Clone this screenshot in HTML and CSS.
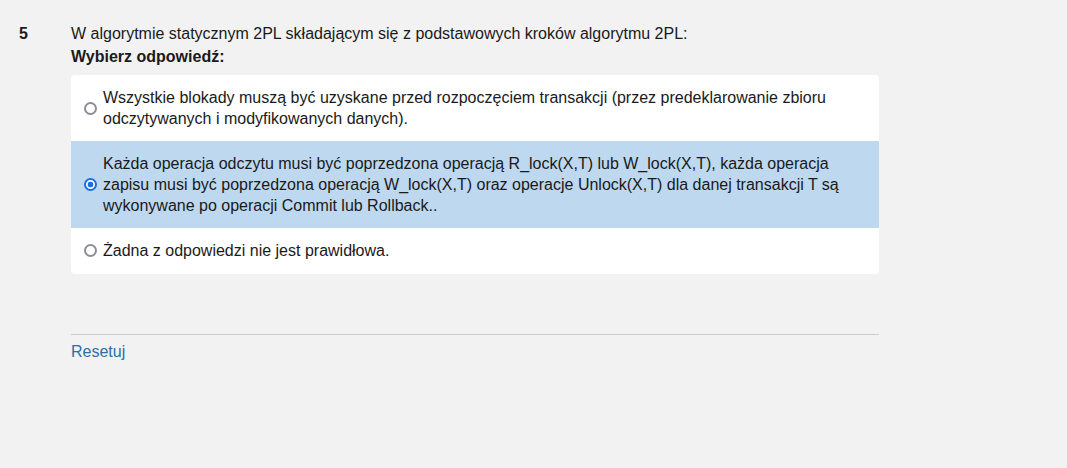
FILE: index.html
```html
<!DOCTYPE html>
<html lang="pl">
<head>
<meta charset="utf-8">
<title>Pytanie 5</title>
<link rel="stylesheet" href="styles.css">
</head>
<body>
<div class="question">
  <div class="qno">5</div>
  <div class="qbody">
    <div class="qtext">W algorytmie statycznym 2PL składającym się z podstawowych kroków algorytmu 2PL:</div>
    <div class="prompt">Wybierz odpowiedź:</div>
    <div class="answers">
      <label class="answer">
        <input type="radio" name="q5">
        <span>Wszystkie blokady muszą być uzyskane przed rozpoczęciem transakcji (przez predeklarowanie zbioru odczytywanych i modyfikowanych danych).</span>
      </label>
      <label class="answer selected">
        <input type="radio" name="q5" checked>
        <span>Każda operacja odczytu musi być poprzedzona operacją R_lock(X,T) lub W_lock(X,T), każda operacja zapisu musi być poprzedzona operacją W_lock(X,T) oraz operacje Unlock(X,T) dla danej transakcji T są wykonywane po operacji Commit lub Rollback..</span>
      </label>
      <label class="answer last">
        <input type="radio" name="q5">
        <span>Żadna z odpowiedzi nie jest prawidłowa.</span>
      </label>
    </div>
    <div class="footer">
      <a class="reset" href="#">Resetuj</a>
    </div>
  </div>
</div>
</body>
</html>
```

FILE: styles.css
```css
html, body {
  margin: 0;
  padding: 0;
  background: #f2f2f2;
}
body {
  font-family: "Liberation Sans", Arial, sans-serif;
  font-size: 16px;
  line-height: 21px;
  color: #1a1a1a;
}
.question {
  display: flex;
  padding-top: 23px;
}
.qno {
  width: 52px;
  padding-left: 19px;
  box-sizing: content-box;
  font-weight: bold;
}
.qbody {
  width: 808px;
}
.qtext {
  margin-bottom: 2px;
}
.prompt {
  font-weight: bold;
  margin-bottom: 8px;
}
.answers {
  background: #ffffff;
  border-radius: 4px;
  overflow: hidden;
}
.answer {
  display: flex;
  align-items: center;
  padding: 12px 40px 12px 13px;
  cursor: pointer;
}
.answer.last {
  padding-bottom: 13px;
}
.answer.selected {
  background: #bdd8ef;
}
.answer input {
  appearance: none;
  -webkit-appearance: none;
  flex: none;
  box-sizing: border-box;
  width: 13px;
  height: 13px;
  margin: 0 6px 0 0;
  border: 2px solid #8e8c97;
  border-radius: 50%;
  background: #ffffff;
}
.answer input:checked {
  border-color: #1a6fe0;
  background: radial-gradient(circle, #1a6fe0 0 2.6px, #ffffff 3.2px);
}
.footer {
  margin-top: 60px;
  border-top: 1px solid #cccccc;
  padding-top: 6px;
}
.reset {
  color: #2d6fa6;
  text-decoration: none;
}
```
